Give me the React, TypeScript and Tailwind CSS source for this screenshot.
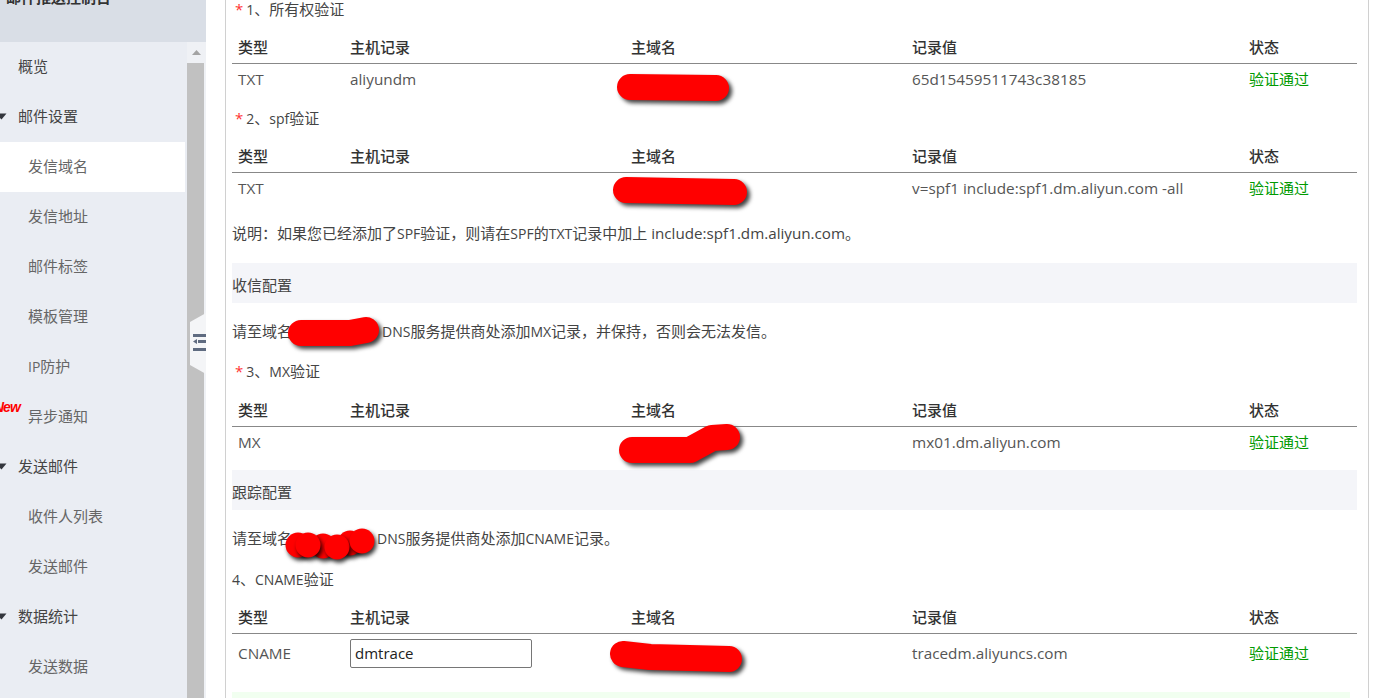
const fontStack = { fontFamily: '"Open Sans", "Noto Sans CJK SC", sans-serif' };

// latin runs sit a bit smaller than the CJK glyphs in running text
const Mixed = ({ text }: { text: string }) => (
  <>
    {text.split(/([\x00-\x7f]+)/).map((part, i) =>
      i % 2 === 1 ? (
        <span key={i} className="text-[14px]">
          {part}
        </span>
      ) : (
        part
      )
    )}
  </>
);

const navItems = [
  { label: "概览", level: 0 },
  { label: "邮件设置", level: 0, arrow: true },
  { label: "发信域名", level: 1, active: true },
  { label: "发信地址", level: 1 },
  { label: "邮件标签", level: 1 },
  { label: "模板管理", level: 1 },
  { label: "IP防护", level: 1 },
  { label: "异步通知", level: 1, badge: true },
  { label: "发送邮件", level: 0, arrow: true },
  { label: "收件人列表", level: 1 },
  { label: "发送邮件", level: 1 },
  { label: "数据统计", level: 0, arrow: true },
  { label: "发送数据", level: 1 },
];

const Sidebar = () => (
  <aside className="relative w-[206px] h-full shrink-0 flex flex-col overflow-hidden bg-[#eaedf3]">
    {/* Header, cut off by the page scroll */}
    <div className="h-[42px] shrink-0 bg-[#d9dee6] pl-[6px]">
      <div className="-mt-[13px] h-5 leading-5 text-[15px] font-bold text-[#333]">邮件推送控制台</div>
    </div>
    <div className="flex-1 flex min-h-0">
      <nav className="w-[185px] shrink-0">
        {navItems.map((item, i) => (
          <div
            key={i}
            className={`relative h-[50px] pb-[1px] flex items-center text-[15px] ${
              item.level === 0 ? "pl-[18px] text-[#444]" : "pl-[28px] text-[#666]"
            } ${item.active ? "bg-white" : ""}`}
          >
            {item.arrow && (
              <svg className="absolute left-0 top-[21px] w-[7px] h-[7px]" viewBox="0 0 7 7">
                <path d="M0 0.5 H6.5 L1.5 6.5 L0 5 Z" fill="#33363d" />
              </svg>
            )}
            {item.badge && (
              <span className="absolute -left-[6px] top-[7px] font-['Liberation_Sans'] text-[14px] leading-4 font-bold italic tracking-[-1px] text-[#f00]">
                New
              </span>
            )}
            <span>
              <Mixed text={item.label} />
            </span>
          </div>
        ))}
      </nav>
      {/* Scrollbar */}
      <div className="w-[19px] ml-[2px] flex flex-col bg-[#eff1f5]">
        <div className="h-[21px] shrink-0 flex items-center justify-center">
          <svg className="w-[9px] h-[5px]" viewBox="0 0 9 5">
            <path d="M4.5 0 L9 5 H0 Z" fill="#a3a3a3" />
          </svg>
        </div>
        <div className="flex-1 bg-[#c1c1c1] mr-[2px]" />
      </div>
    </div>
    {/* Collapse handle */}
    <svg className="absolute left-[190px] top-[313px] w-[16px] h-[61px]" viewBox="0 0 16 61">
      <path d="M16 0 L0 9 V52 L16 61 Z" fill="#f4f5f7" />
      <path d="M3 21 H16 V24 H3 Z M8 27 H16 V30 H8 Z M3 35 H16 V38 H3 Z" fill="#5f6b80" />
      <path d="M3 28.5 L7 26 V31 Z" fill="#5f6b80" />
    </svg>
  </aside>
);

const Label = ({ text, required, className }: { text: string; required?: boolean; className: string }) => (
  <div className={`h-5 leading-5 text-[15px] text-[#444] ${className}`}>
    {required && <span className="text-[#f33] mr-[3px] ml-[3px]">*</span>}
    <Mixed text={text} />
  </div>
);

const headers = ["类型", "主机记录", "主域名", "记录值", "状态"];
const gridCols = "grid grid-cols-[112px_281px_281px_337px_1fr] pl-[6px]";

const RecordTable = ({
  type,
  host,
  value,
  editable,
  className,
}: {
  type: string;
  host?: string;
  value: string;
  editable?: boolean;
  className: string;
}) => (
  <div className={className}>
    <div className={`${gridCols} h-[33px] items-center border-b border-[#888] text-[15px] font-medium text-[#333]`}>
      {headers.map((h) => (
        <div key={h}>{h}</div>
      ))}
    </div>
    <div className={`${gridCols} ${editable ? "h-[40px]" : "h-[30px]"} items-center text-[15.3px] text-[#555]`}>
      <div className={editable ? "pb-[2px]" : "pt-[1px]"}>{type}</div>
      <div className={editable ? "" : "pt-[1px]"}>
        {editable ? (
          <input
            readOnly
            value={host}
            className="w-[182px] h-[29px] mt-[-1px] px-[4px] pb-[1px] block rounded-[2px] border border-[#767676] text-[15px] text-[#222] bg-white outline-none"
          />
        ) : (
          host
        )}
      </div>
      <div />
      <div className={editable ? "pb-[2px]" : "pt-[1px]"}>{value}</div>
      <div className={`text-[15px] text-[#009a00] ${editable ? "pb-[2px]" : ""}`}>验证通过</div>
    </div>
  </div>
);

const Band = ({ text, className }: { text: string; className: string }) => (
  <div className={`h-[40px] pt-[4px] flex items-center bg-[#f4f5f9] text-[15px] text-[#444] ${className}`}>{text}</div>
);

const Scribbles = () => (
  <svg className="absolute inset-0 w-full h-full pointer-events-none" viewBox="0 0 1392 698" fill="none">
    <g
      stroke="#ff0000"
      strokeWidth="26"
      strokeLinecap="round"
      strokeLinejoin="round"
      className="drop-shadow-[3px_3px_2px_rgba(0,0,0,0.75)]"
    >
      <path d="M630 87 L716 88" />
      <path d="M626 190 L734 192" />
      <path d="M301 333 L350 333 L366 330" />
      <path d="M632 450 L690 450 L712 438 L727 437" />
      <path d="M623 654 L650 657 L729 659" />
    </g>
    {[
      [298, 545],
      [323, 546],
      [350, 543],
      [308, 545],
      [337, 547],
      [362, 541],
    ].map(([cx, cy]) => (
      <circle
        key={cx}
        cx={cx}
        cy={cy}
        r="12.5"
        fill="#ff0000"
        className="drop-shadow-[2px_3px_2px_rgba(0,0,0,0.8)]"
      />
    ))}
  </svg>
);

const App = () => (
  <div className="relative w-[1392px] h-[698px] overflow-hidden flex bg-white" style={fontStack}>
    <Sidebar />
    <main className="ml-[19px] w-[1144px] h-full overflow-hidden border-x border-[#d0d0d0] pl-[6px] pr-[11px]">
      <Label required text="1、所有权验证" className="-mt-[1px]" />
      <RecordTable type="TXT" host="aliyundm" value="65d15459511743c38185" className="mt-[12px]" />
      <Label required text="2、spf验证" className="mt-[14px]" />
      <RecordTable
        type="TXT"
        value="v=spf1 include:spf1.dm.aliyun.com -all"
        className="mt-[12px]"
      />
      <div className="mt-[20px] h-5 leading-5 text-[15px] text-[#444]">
        <Mixed text="说明：如果您已经添加了SPF验证，则请在SPF的TXT记录中加上" />
        <span className="text-[15.2px]"> include:spf1.dm.aliyun.com</span>。
      </div>
      <Band text="收信配置" className="mt-[20px]" />
      <div className="mt-[18px] h-5 leading-5 text-[15px] text-[#444] flex">
        <span className="w-[150px] shrink-0">请至域名</span>
        <span>
          <Mixed text="DNS服务提供商处添加MX记录，并保持，否则会无法发信。" />
        </span>
      </div>
      <Label required text="3、MX验证" className="mt-[20px]" />
      <RecordTable type="MX" value="mx01.dm.aliyun.com" className="mt-[13px]" />
      <Band text="跟踪配置" className="mt-[13px]" />
      <div className="mt-[18px] h-5 leading-5 text-[15px] text-[#444] flex">
        <span className="w-[145px] shrink-0">请至域名</span>
        <span>
          <Mixed text="DNS服务提供商处添加CNAME记录。" />
        </span>
      </div>
      <Label text="4、CNAME验证" className="mt-[21px]" />
      <RecordTable type="CNAME" host="dmtrace" value="tracedm.aliyuncs.com" editable className="mt-[12px]" />
      <div className="mt-[18px] mr-[7px] h-[40px] bg-[#f1fff0]" />
    </main>
    <Scribbles />
  </div>
);

export default App;
